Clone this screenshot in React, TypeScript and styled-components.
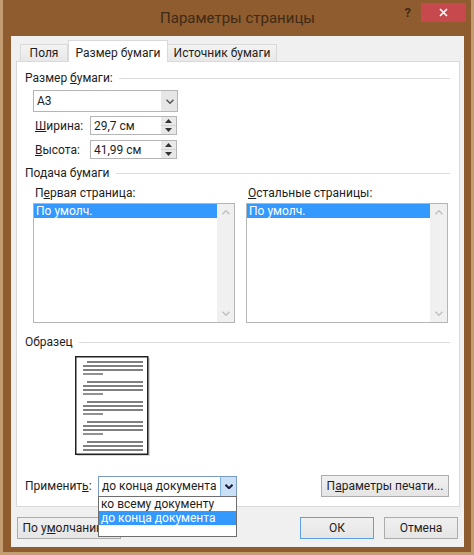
import React from "react";
import styled, { createGlobalStyle } from "styled-components";

const GlobalStyle = createGlobalStyle`
  html, body { margin: 0; padding: 0; }
  body {
    background: #c49c72;
    font-family: Roboto, "Noto Sans", "Segoe UI", "Liberation Sans", sans-serif;
    font-size: 12px;
    color: #1e1e1e;
  }
  * { box-sizing: border-box; }
`;

const Outer = styled.div`
  width: 474px;
  height: 555px;
  padding: 0 3px 3px 3px;
  background: #c49c72;
  display: flex;
`;

const Frame = styled.div`
  flex: 1;
  display: flex;
  flex-direction: column;
  background: #8e5c2e;
  padding: 0 7px 5px 8px;
`;

const TitleBar = styled.div`
  height: 36px;
  display: grid;
  grid-template-columns: 1fr auto 1fr;
  align-items: start;
`;

const Title = styled.div`
  grid-column: 2;
  margin-top: 8px;
  font-size: 15px;
  line-height: 20px;
  color: #3f2a16;
`;

const Controls = styled.div`
  grid-column: 3;
  justify-self: end;
  display: flex;
  align-items: flex-start;
  margin-right: -2px;
  margin-top: 3px;
`;

const Help = styled.div`
  font-size: 13px;
  font-weight: bold;
  line-height: 16px;
  color: #3f2a16;
  margin-right: 10px;
  margin-top: 2px;
`;

const Close = styled.div`
  width: 45px;
  height: 19px;
  background: #c8494d;
  display: flex;
  align-items: center;
  justify-content: center;
`;

const Client = styled.div`
  flex: 1;
  display: flex;
  flex-direction: column;
  background: #f0f0f0;
  padding: 4px 4px 0 5px;
`;

const TabStrip = styled.div`
  height: 21px;
  display: flex;
  align-items: flex-end;
  padding-left: 4px;
`;

const Tab = styled.div<{ $active?: boolean; $w: number }>`
  position: relative;
  z-index: ${(p) => (p.$active ? 2 : 1)};
  width: ${(p) => p.$w}px;
  height: ${(p) => (p.$active ? 22 : 17)}px;
  margin-bottom: ${(p) => (p.$active ? -1 : 0)}px;
  padding-top: ${(p) => (p.$active ? 4 : 0)}px;
  line-height: 16px;
  text-align: center;
  white-space: nowrap;
  border: 1px solid #d9d9d9;
  border-bottom: none;
  border-left-width: ${(p) => (p.$active ? 1 : 0)}px;
  background: ${(p) => (p.$active ? "#ffffff" : "linear-gradient(#f3f3f3, #e8e8e8)")};
  &:first-child { border-left-width: 1px; }
`;

const Panel = styled.div`
  display: flex;
  flex-direction: column;
  background: #ffffff;
  border: 1px solid #d9d9d9;
  padding: 8px 9px 9px 8px;
`;

const GroupHeader = styled.div<{ $mt?: number }>`
  display: flex;
  align-items: center;
  gap: 6px;
  line-height: 16px;
  margin-top: ${(p) => p.$mt ?? 0}px;
  white-space: nowrap;
  &::after {
    content: "";
    flex: 1;
    height: 1px;
    background: #dcdcdc;
  }
`;

const Combo = styled.div<{ $w: number; $h: number; $open?: boolean }>`
  position: relative;
  width: ${(p) => p.$w}px;
  height: ${(p) => p.$h}px;
  display: flex;
  background: #fff;
  border: 1px solid ${(p) => (p.$open ? "#7a9cc4" : "#b5b5b5")};
`;

const ComboText = styled.div`
  flex: 1;
  min-width: 0;
  padding-left: 3px;
  display: flex;
  align-items: center;
  white-space: nowrap;
  overflow: hidden;
`;

const DropBtn = styled.div<{ $open?: boolean }>`
  width: 16px;
  flex: none;
  display: flex;
  align-items: center;
  justify-content: center;
  background: ${(p) => (p.$open ? "#c9e0f7" : "#e6e6e6")};
  border-left: 1px solid ${(p) => (p.$open ? "#7eb4ea" : "#e6e6e6")};
`;

const PaperCombo = styled(Combo)`
  margin-left: 8px;
  margin-top: 4px;
`;

const SpinRow = styled.div<{ $mt: number }>`
  display: flex;
  align-items: center;
  margin-left: 10px;
  margin-top: ${(p) => p.$mt}px;
`;

const FieldLabel = styled.div<{ $w: number }>`
  width: ${(p) => p.$w}px;
  white-space: nowrap;
`;

const SpinBox = styled.div`
  width: 87px;
  height: 19px;
  display: flex;
  border: 1px solid #b5b5b5;
  background: #fff;
`;

const SpinText = styled.div`
  flex: 1;
  padding-left: 3px;
  display: flex;
  align-items: center;
`;

const SpinButtons = styled.div`
  width: 15px;
  display: flex;
  flex-direction: column;
  background: #e8e8e8;
`;

const SpinHalf = styled.div`
  flex: 1;
  display: flex;
  align-items: center;
  justify-content: center;
  & + & { border-top: 1px solid #d4d4d4; }
`;

const ListsRow = styled.div`
  display: flex;
  gap: 11px;
  margin-left: 8px;
  margin-top: 4px;
`;

const ListColumn = styled.div`
  width: 202px;
  display: flex;
  flex-direction: column;
`;

const ListLabel = styled.div`
  line-height: 16px;
  padding-left: 2px;
  white-space: nowrap;
`;

const ListBox = styled.div`
  height: 120px;
  margin-top: 2px;
  display: flex;
  border: 1px solid #b5b5b5;
  background: #fff;
`;

const ListItems = styled.div`
  flex: 1;
`;

const Item = styled.div<{ $selected?: boolean }>`
  height: 14px;
  line-height: 14px;
  padding-left: 2px;
  white-space: nowrap;
  background: ${(p) => (p.$selected ? "#3399ff" : "transparent")};
  color: ${(p) => (p.$selected ? "#ffffff" : "#1e1e1e")};
`;

const ScrollBar = styled.div`
  width: 17px;
  display: flex;
  flex-direction: column;
  justify-content: space-between;
  background: #f0f0f0;
`;

const ScrollArrow = styled.div`
  height: 17px;
  display: flex;
  align-items: center;
  justify-content: center;
`;

const Sample = styled.div`
  margin-left: 50px;
  margin-top: 6px;
  height: 99px;
`;

const ApplyRow = styled.div`
  display: flex;
  align-items: center;
  margin-top: 20px;
  height: 22px;
`;

const DropList = styled.div`
  position: absolute;
  z-index: 10;
  top: 100%;
  left: -1px;
  right: -1px;
  height: 41px;
  background: #fff;
  border: 1px solid #6e6e6e;
`;

const Spacer = styled.div`
  flex: 1;
`;

const Button = styled.div<{ $w: number; $default?: boolean }>`
  width: ${(p) => p.$w}px;
  height: 22px;
  display: flex;
  align-items: center;
  justify-content: center;
  white-space: nowrap;
  background: linear-gradient(#f0f0f0, #e5e5e5);
  border: 1px solid ${(p) => (p.$default ? "#5ea0e6" : "#acacac")};
`;

const PrintButton = styled(Button)`
  margin-right: 1px;
`;

const BottomRow = styled.div`
  display: flex;
  align-items: center;
  gap: 10px;
  margin-top: 10px;
  padding-left: 1px;
  padding-right: 2px;
`;

const Chevron = ({ dir = "down", color = "#555", w = 1.5 }: { dir?: "up" | "down"; color?: string; w?: number }) => (
  <svg width="8" height="5" viewBox="0 0 8 5">
    <polyline
      points={dir === "down" ? "0.5,0.8 4,4.2 7.5,0.8" : "0.5,4.2 4,0.8 7.5,4.2"}
      fill="none"
      stroke={color}
      strokeWidth={w}
    />
  </svg>
);

const Tri = ({ dir }: { dir: "up" | "down" }) => (
  <svg width="7" height="4" viewBox="0 0 7 4">
    <polygon points={dir === "up" ? "0,4 3.5,0 7,4" : "0,0 3.5,4 7,0"} fill="#333" />
  </svg>
);

const SamplePage = () => {
  const groups = [0, 20, 40, 60];
  const lines: React.ReactNode[] = [];
  groups.forEach((g, i) => {
    const y = 6 + g;
    lines.push(<line key={`a${i}`} x1={12} x2={68} y1={y} y2={y} />);
    lines.push(<line key={`b${i}`} x1={8} x2={68} y1={y + 4} y2={y + 4} />);
    lines.push(<line key={`c${i}`} x1={8} x2={68} y1={y + 8} y2={y + 8} />);
    lines.push(<line key={`d${i}`} x1={8} x2={28} y1={y + 12} y2={y + 12} />);
  });
  lines.push(<line key="e1" x1={12} x2={68} y1={86} y2={86} />);
  lines.push(<line key="e2" x1={8} x2={68} y1={90} y2={90} />);
  lines.push(<line key="e3" x1={8} x2={68} y1={94} y2={94} />);
  return (
    <svg width="76" height="101" viewBox="0 0 76 101">
      <rect x="2" y="2" width="73" height="98" fill="#d8d8d8" />
      <rect x="0.75" y="0.75" width="72" height="97.5" fill="#fff" stroke="#222" strokeWidth="1.5" />
      <g stroke="#555" strokeWidth="1.3">{lines}</g>
    </svg>
  );
};

const ListWithScroll = ({ label }: { label: React.ReactNode }) => (
  <ListColumn>
    <ListLabel>{label}</ListLabel>
    <ListBox>
      <ListItems>
        <Item $selected>По умолч.</Item>
      </ListItems>
      <ScrollBar>
        <ScrollArrow>
          <Chevron dir="up" color="#c2c2c2" />
        </ScrollArrow>
        <ScrollArrow>
          <Chevron dir="down" color="#c2c2c2" />
        </ScrollArrow>
      </ScrollBar>
    </ListBox>
  </ListColumn>
);

export default function App() {
  return (
    <>
      <GlobalStyle />
      <Outer>
        <Frame>
          <TitleBar>
            <Title>Параметры страницы</Title>
            <Controls>
              <Help>?</Help>
              <Close>
                <svg width="9" height="9" viewBox="0 0 9 9">
                  <path d="M1 1 L8 8 M8 1 L1 8" stroke="#fff" strokeWidth="1.6" />
                </svg>
              </Close>
            </Controls>
          </TitleBar>
          <Client>
            <TabStrip>
              <Tab $w={48}>Поля</Tab>
              <Tab $w={100} $active>Размер бумаги</Tab>
              <Tab $w={109}>Источник бумаги</Tab>
            </TabStrip>
            <Panel>
              <GroupHeader>
                <span>
                  Размер <u>б</u>умаги:
                </span>
              </GroupHeader>
              <PaperCombo $w={145} $h={22}>
                <ComboText>A3</ComboText>
                <DropBtn>
                  <Chevron />
                </DropBtn>
              </PaperCombo>
              <SpinRow $mt={4}>
                <FieldLabel $w={55}>
                  <u>Ш</u>ирина:
                </FieldLabel>
                <SpinBox>
                  <SpinText>29,7 см</SpinText>
                  <SpinButtons>
                    <SpinHalf>
                      <Tri dir="up" />
                    </SpinHalf>
                    <SpinHalf>
                      <Tri dir="down" />
                    </SpinHalf>
                  </SpinButtons>
                </SpinBox>
              </SpinRow>
              <SpinRow $mt={5}>
                <FieldLabel $w={55}>
                  <u>В</u>ысота:
                </FieldLabel>
                <SpinBox>
                  <SpinText>41,99 см</SpinText>
                  <SpinButtons>
                    <SpinHalf>
                      <Tri dir="up" />
                    </SpinHalf>
                    <SpinHalf>
                      <Tri dir="down" />
                    </SpinHalf>
                  </SpinButtons>
                </SpinBox>
              </SpinRow>
              <GroupHeader $mt={6}>
                <span>Подача бумаги</span>
              </GroupHeader>
              <ListsRow>
                <ListWithScroll
                  label={
                    <>
                      П<u>е</u>рвая страница:
                    </>
                  }
                />
                <ListWithScroll
                  label={
                    <>
                      <u>О</u>стальные страницы:
                    </>
                  }
                />
              </ListsRow>
              <GroupHeader $mt={11}>
                <span>Образец</span>
              </GroupHeader>
              <Sample>
                <SamplePage />
              </Sample>
              <ApplyRow>
                <FieldLabel $w={73}>
                  Применит<u>ь</u>:
                </FieldLabel>
                <Combo $w={139} $h={21} $open>
                  <ComboText>до конца документа</ComboText>
                  <DropBtn $open>
                    <Chevron color="#1a1a3a" w={2} />
                  </DropBtn>
                  <DropList>
                    <Item>ко всему документу</Item>
                    <Item $selected>до конца документа</Item>
                  </DropList>
                </Combo>
                <Spacer />
                <PrintButton $w={128}>
                  П<u>а</u>раметры печати...
                </PrintButton>
              </ApplyRow>
            </Panel>
            <BottomRow>
              <Button $w={104}>
                По у<u>м</u>олчанию...
              </Button>
              <Spacer />
              <Button $w={74} $default>
                ОК
              </Button>
              <Button $w={74}>Отмена</Button>
            </BottomRow>
          </Client>
        </Frame>
      </Outer>
    </>
  );
}
